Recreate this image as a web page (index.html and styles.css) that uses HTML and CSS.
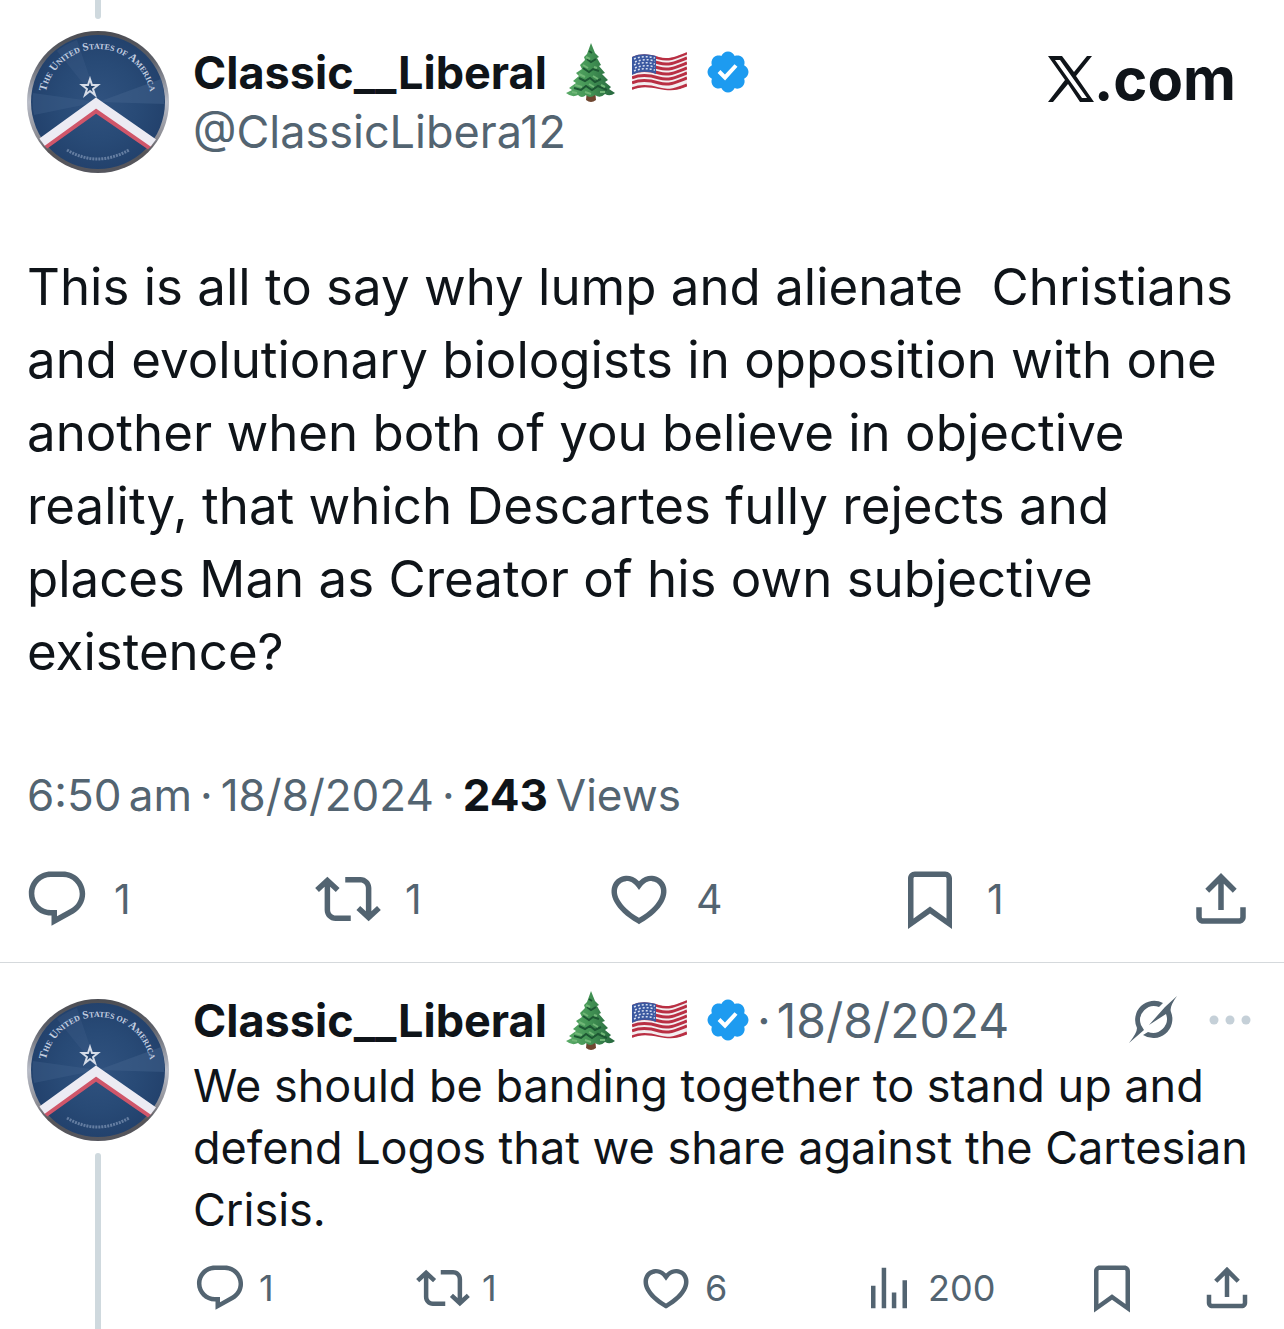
FILE: index.html
```html
<!DOCTYPE html>
<html lang="en">
<head>
<meta charset="utf-8">
<meta name="viewport" content="width=device-width, initial-scale=1">
<title>Classic__Liberal on X</title>
<link rel="stylesheet" href="styles.css">
</head>
<body>
<svg class="defs" aria-hidden="true">
  <defs>
    <linearGradient id="rim" x1="0" y1="0" x2="0" y2="1">
      <stop offset="0" stop-color="#4b4c52"/>
      <stop offset=".2" stop-color="#5c5f68"/>
      <stop offset=".5" stop-color="#b9bdc8"/>
      <stop offset=".75" stop-color="#8b8b92"/>
      <stop offset=".85" stop-color="#565559"/>
      <stop offset="1" stop-color="#55565e"/>
    </linearGradient>
    <radialGradient id="disc" cx=".5" cy=".5" r=".5">
      <stop offset="0" stop-color="#30527f"/>
      <stop offset=".6" stop-color="#284a76"/>
      <stop offset="1" stop-color="#23426d"/>
    </radialGradient>
    <linearGradient id="leaf" x1="0" y1="0" x2="1" y2="0">
      <stop offset="0" stop-color="#5bab68"/>
      <stop offset=".45" stop-color="#459656"/>
      <stop offset="1" stop-color="#25663d"/>
    </linearGradient>
    <clipPath id="disc-clip"><circle cx="71" cy="71" r="69"/></clipPath>
    <clipPath id="flag-clip"><path d="M0 5C9 1 17 2 27 5S45 4 55 0V35C45 39 37 39 27 37S9 34 0 38Z"/></clipPath>
    <path id="arc-top" d="M18 71A53 53 0 0 1 124 71"/>
  </defs>
  <symbol id="avatar" viewBox="0 0 142 142">
    <circle cx="71" cy="71" r="71" fill="url(#rim)"/>
    <circle cx="71" cy="71" r="67" fill="url(#disc)"/>
    <path d="M71 71L134 48A66 66 0 0 1 137 73Z" fill="#41618c" opacity=".5"/>
    <path d="M71 71L6 62A66 66 0 0 0 7 84Z" fill="#41618c" opacity=".4"/>
    <path d="M71 71L30 20A66 66 0 0 1 50 9Z" fill="#41618c" opacity=".3"/>
    <g clip-path="url(#disc-clip)">
      <path d="M6 124L69 79L136 125" fill="none" stroke="#d0566a" stroke-width="6"/>
      <path d="M4 119L69 72L138 120" fill="none" stroke="#ecebf3" stroke-width="9"/>
    </g>
    <path d="M63 48l2 6h6l-5 4 2 6-5-4-5 4 2-6-5-4h6z" fill="#25456f" stroke="#d5dce8" stroke-width="2"/>
    <text class="avatar-text"><textPath href="#arc-top" startOffset="50%" text-anchor="middle">T<tspan class="sc">HE</tspan> U<tspan class="sc">NITED</tspan> S<tspan class="sc">TATES OF</tspan> A<tspan class="sc">MERICA</tspan></textPath></text>
    <path d="M40 119Q70 137 102 119" fill="none" stroke="#8fa3c1" stroke-width="3" stroke-dasharray="2 1" opacity=".6"/>
  </symbol>
  <symbol id="tree" viewBox="0 0 50 60">
    <path d="M22 48h8l1 10q-5 4-10 0z" fill="#6f4630"/>
    <path d="M26 1L30 11L34 15L32 16L36 23L34 24L40 31L37 32L43 38L40 40L46 45L44 47L50 51Q45 55 40 52Q35 57 30 53Q25 57 21 53Q17 57 13 53Q7 56 1 51L7 48L4 46L11 41L8 39L14 34L11 31L17 27L15 23L20 18L19 15L22 12Z" fill="url(#leaf)"/>
    <path d="M22 17l4 3 5-3M18 26l6 4 4-3 6 2M14 36l6 3 5-3 5 4 6-3M9 46l7 2 5-4 6 4 6-4 9 4M24 9l3 2" fill="none" stroke="#1d5733" stroke-width="2"/>
    <path d="M21 15l4 2M18 23l5 3M29 25l3 1M14 32l6 3M28 34l5 3M10 43l7 2M24 42l5 3M36 43l4 2M7 50l5 1M20 50l6 2M35 50l5 0" stroke="#71b777" stroke-width="2"/>
  </symbol>
  <symbol id="flag" viewBox="0 0 55 40">
    <g clip-path="url(#flag-clip)">
      <path d="M0 0h55v40H0z" fill="#f3eef0"/>
      <g fill="none" stroke="#b92f43" stroke-width="3">
        <path d="M0 6C9 2 17 3 27 6S45 5 55 1"/>
        <path d="M0 11C9 7 17 8 27 11S45 10 55 6"/>
        <path d="M0 16C9 12 17 13 27 16S45 15 55 11"/>
        <path d="M0 21C9 17 17 18 27 21S45 20 55 16"/>
        <path d="M0 26C9 22 17 23 27 26S45 25 55 21"/>
        <path d="M0 31C9 27 17 28 27 31S45 30 55 26"/>
        <path d="M0 37C9 33 17 34 27 37S45 37 55 33"/>
      </g>
      <path d="M0 0H24V22C16 19 8 19 0 23Z" fill="#3a58a0"/>
      <g fill="none" stroke="#d7dff0" stroke-width="1.500" stroke-dasharray="2 2">
        <path d="M2 7Q12 3 23 6"/><path d="M3 10Q12 6 23 9"/><path d="M2 13Q12 9 23 12"/><path d="M3 16Q12 12 23 15"/><path d="M2 19Q12 15 23 18"/>
      </g>
    </g>
  </symbol>
  <symbol id="verified" viewBox="0 0 22 22">
    <path fill="#1d9bf0" d="M20.396 11c-.018-.646-.215-1.275-.57-1.816-.354-.54-.852-.972-1.438-1.246.223-.607.27-1.264.14-1.897-.131-.634-.437-1.218-.882-1.687-.47-.445-1.053-.75-1.687-.882-.633-.13-1.290-.083-1.897.14-.273-.587-.704-1.086-1.245-1.440S11.647 1.620 11 1.604c-.646.017-1.273.213-1.813.568s-.969.854-1.240 1.440c-.608-.223-1.267-.272-1.902-.140-.635.130-1.220.436-1.690.882-.445.470-.749 1.055-.878 1.688-.130.633-.080 1.290.144 1.896-.587.274-1.087.705-1.443 1.245-.356.540-.555 1.170-.574 1.817.020.647.218 1.276.574 1.817.356.540.856.972 1.443 1.245-.224.606-.274 1.263-.144 1.896.130.634.433 1.218.877 1.688.470.443 1.054.747 1.687.878.633.132 1.290.084 1.897-.136.274.586.705 1.084 1.246 1.439.540.354 1.170.551 1.816.569.647-.016 1.276-.213 1.817-.567s.972-.854 1.245-1.440c.604.239 1.266.296 1.903.164.636-.132 1.220-.447 1.680-.907.460-.460.776-1.044.908-1.681s.075-1.299-.165-1.903c.586-.274 1.084-.705 1.439-1.246.354-.540.551-1.170.569-1.816z"/>
    <path fill="#fff" d="M9.662 14.850l-3.429-3.428 1.293-1.302 2.072 2.072 4.400-4.794 1.347 1.246z"/>
  </symbol>
  <symbol id="xmark" viewBox="0 0 46 46">
    <path fill-rule="evenodd" d="M0 0H14L26 16L39 0H44L28 20L46 46H32L20 28L5 46H0L17 24ZM7 4L34 42H39L12 4Z"/>
  </symbol>
  <symbol id="reply" viewBox="0 0 24 24"><path d="M1.751 10c0-4.420 3.584-8 8.005-8h4.366c4.490 0 8.129 3.640 8.129 8.130 0 2.960-1.607 5.680-4.196 7.110l-8.054 4.460v-3.690h-.067c-4.490.100-8.183-3.510-8.183-8.010zm8.005-6c-3.317 0-6.005 2.690-6.005 6 0 3.370 2.770 6.080 6.138 6.010l.351-.010h1.761v2.300l5.087-2.810c1.951-1.080 3.163-3.130 3.163-5.360 0-3.390-2.744-6.130-6.129-6.130H9.756z"/></symbol>
  <symbol id="repost" viewBox="0 0 24 24"><path d="M4.500 3.880l4.432 4.140-1.364 1.460L5.500 7.550V16c0 1.100.896 2 2 2H13v2H7.500c-2.209 0-4-1.790-4-4V7.550L1.432 9.480.068 8.020 4.500 3.880zM16.500 6H11V4h5.500c2.209 0 4 1.790 4 4v8.450l2.068-1.930 1.364 1.460-4.432 4.140-4.432-4.140 1.364-1.460 2.068 1.930V8c0-1.100-.896-2-2-2z"/></symbol>
  <symbol id="like" viewBox="0 0 24 24"><path d="M16.697 5.500c-1.222-.060-2.679.510-3.890 2.160l-.805 1.090-.806-1.090C9.984 6.010 8.526 5.440 7.304 5.500c-1.243.070-2.349.780-2.910 1.910-.552 1.120-.633 2.780.479 4.820 1.074 1.970 3.257 4.270 7.129 6.610 3.870-2.340 6.052-4.640 7.126-6.610 1.111-2.040 1.030-3.700.477-4.820-.561-1.130-1.666-1.840-2.908-1.910zm4.187 7.690c-1.351 2.480-4.001 5.120-8.379 7.670l-.503.300-.504-.300c-4.379-2.550-7.029-5.190-8.382-7.670-1.360-2.500-1.410-4.860-.514-6.670.887-1.790 2.647-2.910 4.601-3.010 1.651-.090 3.368.560 4.798 2.010 1.429-1.450 3.146-2.100 4.796-2.010 1.954.100 3.714 1.220 4.601 3.010.896 1.810.846 4.170-.514 6.670z"/></symbol>
  <symbol id="bookmark" viewBox="0 0 24 24"><path d="M4 4.500C4 3.120 5.119 2 6.500 2h11C18.881 2 20 3.120 20 4.500v18.440l-8-5.710-8 5.710V4.500zM6.500 4c-.276 0-.500.220-.500.500v14.560l6-4.290 6 4.290V4.500c0-.280-.224-.500-.500-.500h-11z"/></symbol>
  <symbol id="share" viewBox="0 0 24 24"><path d="M12 2.590l5.700 5.700-1.410 1.420L13 6.410V16h-2V6.410l-3.300 3.300-1.410-1.420L12 2.590zM21 15v3.500c0 1.380-1.120 2.500-2.500 2.500h-13C4.110 21 3 19.880 3 18.500V15h2v3.500c0 .280.220.500.500.500h13c.280 0 .500-.220.500-.500V15h2z"/></symbol>
  <symbol id="views" viewBox="0 0 24 24"><path d="M8.750 21V3h2v18h-2zM18 21V8.500h2V21h-2zM4 21V11h2v10H4zm9.250 0v-7h2v7h-2z"/></symbol>
  <symbol id="grok" viewBox="0 0 48 48">
    <path d="M34 7A19 19 0 0 0 8 32Q8 37 0 47L15 34L12 29A14 14 0 0 1 30 11Z"/>
    <path d="M48 0L36 11L20 29L37 18A14 14 0 0 1 19 36L14 39A19 19 0 0 0 42 16Q40 11 48 0Z"/>
  </symbol>
  <symbol id="more" viewBox="0 0 42 10"><circle cx="5" cy="5" r="4.500"/><circle cx="21" cy="5" r="4.500"/><circle cx="37" cy="5" r="4.500"/></symbol>
</svg>

<main class="thread">
  <article class="post">
    <span class="thread-line thread-line-in"></span>
    <header class="post-header">
      <svg class="avatar" role="img" aria-label="Classic__Liberal avatar"><use href="#avatar"/></svg>
      <div class="author">
        <div class="name-row">
          <a class="name" href="#">Classic__Liberal</a>
          <svg class="tree"><use href="#tree"/></svg>
          <svg class="flag"><use href="#flag"/></svg>
          <svg class="verified"><use href="#verified"/></svg>
        </div>
        <a class="handle" href="#">@ClassicLibera12</a>
      </div>
      <a class="brand" href="#"><svg class="xmark"><use href="#xmark"/></svg>.com</a>
    </header>
    <p class="post-text">This is all to say why lump and alienate&nbsp; Christians<br>and evolutionary biologists in opposition with one<br>another when both of you believe in objective<br>reality, that which Descartes fully rejects and<br>places Man as Creator of his own subjective<br>existence?</p>
    <p class="meta"><span>6:50&#8198;am</span><span>·</span><span>18/8/2024</span><span>·</span><strong>243</strong><span>Views</span></p>
    <div class="actions">
      <button class="action" aria-label="Reply"><svg class="icon"><use href="#reply"/></svg><span>1</span></button>
      <button class="action" aria-label="Repost"><svg class="icon"><use href="#repost"/></svg><span>1</span></button>
      <button class="action" aria-label="Like"><svg class="icon"><use href="#like"/></svg><span>4</span></button>
      <button class="action" aria-label="Bookmark"><svg class="icon"><use href="#bookmark"/></svg><span>1</span></button>
      <button class="action action-end" aria-label="Share"><svg class="icon"><use href="#share"/></svg></button>
    </div>
  </article>

  <article class="reply">
    <div class="rail">
      <svg class="avatar" role="img" aria-label="Classic__Liberal avatar"><use href="#avatar"/></svg>
      <span class="thread-line thread-line-out"></span>
    </div>
    <div class="reply-main">
      <header class="name-row">
        <a class="name" href="#">Classic__Liberal</a>
        <svg class="tree"><use href="#tree"/></svg>
        <svg class="flag"><use href="#flag"/></svg>
        <svg class="verified"><use href="#verified"/></svg>
        <span class="date"><span>·</span><span>18/8/2024</span></span>
        <span class="tools">
          <button class="tool" aria-label="Grok"><svg class="grok"><use href="#grok"/></svg></button>
          <button class="tool" aria-label="More"><svg class="more"><use href="#more"/></svg></button>
        </span>
      </header>
      <p class="reply-text">We should be banding together to stand up and<br>defend Logos that we share against the Cartesian<br>Crisis.</p>
      <div class="actions actions-small">
        <button class="action" aria-label="Reply"><svg class="icon"><use href="#reply"/></svg><span>1</span></button>
        <button class="action" aria-label="Repost"><svg class="icon"><use href="#repost"/></svg><span>1</span></button>
        <button class="action" aria-label="Like"><svg class="icon"><use href="#like"/></svg><span>6</span></button>
        <button class="action" aria-label="Views"><svg class="icon"><use href="#views"/></svg><span>200</span></button>
        <button class="action action-end" aria-label="Bookmark"><svg class="icon"><use href="#bookmark"/></svg></button>
        <button class="action action-end" aria-label="Share"><svg class="icon"><use href="#share"/></svg></button>
      </div>
    </div>
  </article>
</main>
</body>
</html>
```
FILE: styles.css
```css
* { box-sizing: border-box; }

body {
  margin: 0;
  background: #fff;
  color: #0f1419;
  font-family: Inter, "Liberation Sans", sans-serif;
}

p { margin: 0; white-space: nowrap; }
a { color: inherit; text-decoration: none; }
svg { display: block; flex: none; fill: currentColor; }
button {
  padding: 0;
  border: 0;
  background: none;
  color: inherit;
  font: inherit;
  cursor: pointer;
}

.defs { position: absolute; width: 0; height: 0; }
.avatar { width: 142px; height: 142px; }
.avatar-text { font: 700 11px "Liberation Serif", serif; fill: #c3cee0; }
.sc { font-size: 8px; }

.post {
  display: flex;
  flex-direction: column;
  padding: 0 30px 30px 27px;
  border-bottom: 1px solid #d5d9dc;
}

.thread-line { width: 6px; background: #cfd9de; }
.thread-line-in {
  height: 19px;
  margin: 0 0 12px 68px;
  border-radius: 0 0 3px 3px;
}
.thread-line-out { flex: 1; border-radius: 3px 3px 0 0; }

.post-header { display: flex; gap: 24px; }
.author { flex: 1; padding-top: 11px; }
.name-row { display: flex; align-items: center; height: 60px; }
.name { font-size: 45px; font-weight: 700; }
.tree { width: 50px; height: 60px; margin-left: 18px; }
.flag { width: 55px; height: 40px; margin-left: 17px; }
.verified { width: 48px; height: 48px; margin-left: 17px; }
.handle {
  display: block;
  font-size: 45px;
  line-height: 60px;
  color: #536471;
}
.brand {
  display: flex;
  align-items: center;
  height: 60px;
  margin: 18px 18px 0 0;
  font-size: 58px;
  font-weight: 700;
}
.xmark { width: 46px; height: 46px; }

.post-text { margin-top: 77px; font-size: 51px; line-height: 73px; }
.meta {
  display: flex;
  gap: 8px;
  margin-top: 79px;
  font-size: 44px;
  line-height: 56px;
  color: #536471;
}
.meta strong { color: #0f1419; }

.actions {
  display: flex;
  margin: 43px 0 0 -3px;
  font-size: 41px;
  color: #536471;
}
.action { display: flex; flex: 1; align-items: center; gap: 24px; }
.action-end { flex: none; }
.icon { width: 66px; height: 66px; }

.reply { display: flex; gap: 24px; padding: 27px 30px 0 27px; }
.rail {
  display: flex;
  flex-direction: column;
  align-items: center;
  gap: 12px;
  padding-top: 9px;
}
.reply-main { flex: 1; min-width: 0; padding-bottom: 14px; }
.date {
  display: flex;
  gap: 6px;
  margin-left: 5px;
  font-size: 48px;
  color: #536471;
}
.tools {
  display: flex;
  align-items: center;
  gap: 32px;
  margin: 0 3px 0 auto;
  color: #536471;
}
.grok { width: 48px; height: 48px; }
.more { width: 42px; height: 10px; color: #c5d0d8; }
.reply-text { margin-top: 5px; font-size: 45px; line-height: 62px; }
.actions-small { margin: 20px 0 0; font-size: 36px; }
.actions-small .action { gap: 12px; }
.actions-small .action-end + .action-end { margin-left: 61px; }
.actions-small .icon { width: 54px; height: 54px; }
```
